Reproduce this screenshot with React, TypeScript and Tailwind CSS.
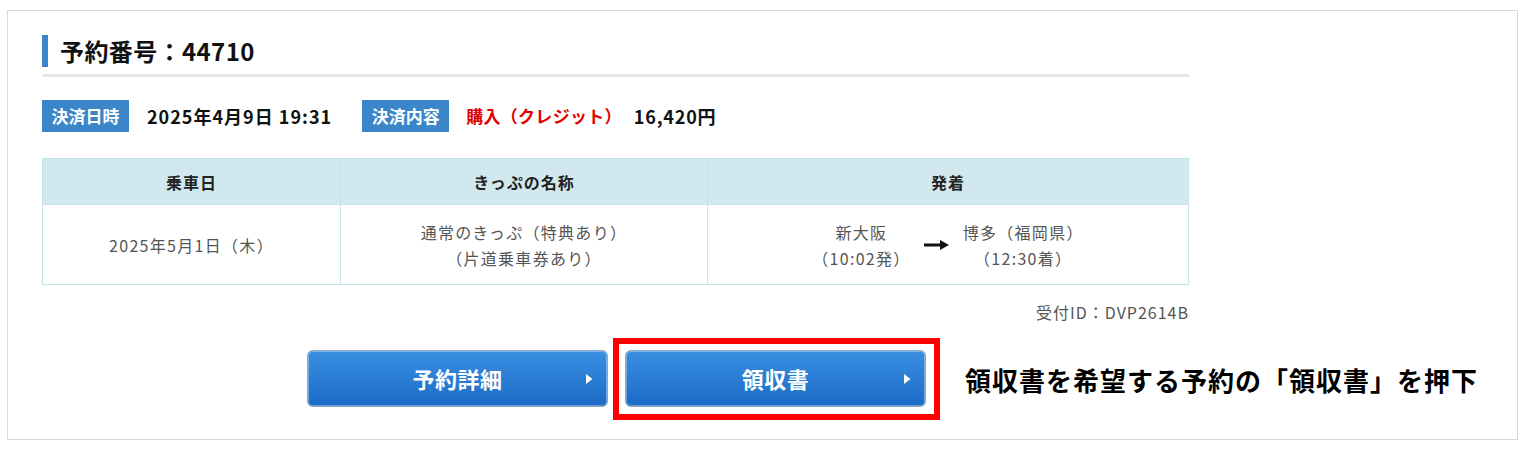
import React from "react";

const jp = { fontFamily: '"Noto Sans CJK JP", "Noto Sans", sans-serif' };

function Badge({ children }: { children: React.ReactNode }) {
  return (
    <div className="h-[32px] w-[87px] bg-[#3b86c8] text-white font-bold text-[17px] flex items-center justify-center">
      {children}
    </div>
  );
}

function BlueButton({ label }: { label: string }) {
  return (
    <div className="relative w-[301px] h-[57px] rounded-[6px] border border-[#8ea6bf] bg-gradient-to-b from-[#3a8fe2] to-[#1a6bc6] shadow-[inset_0_0_0_1px_rgba(255,255,255,0.35)] flex items-center justify-center">
      <span className="text-white font-bold text-[22px] tracking-[0.5px]">{label}</span>
      <svg className="absolute right-[14px] top-1/2 -translate-y-1/2" width="8" height="11" viewBox="0 0 8 11">
        <path d="M1 0.5 L7.5 5.5 L1 10.5 Z" fill="#fff" />
      </svg>
    </div>
  );
}

export default function App() {
  return (
    <div className="w-[1536px] h-[453px] bg-white pt-[10px] pl-[7px]" style={jp}>
      <div className="w-[1511px] h-[430px] border border-[#d9d9d9] pt-[24px] pl-[34px]">
        <div className="w-[1147px] flex flex-col">
          <div className="h-[32px] border-l-[6px] border-[#3b86c8] pl-[12px] flex items-center">
            <span className="text-[24px] font-bold text-[#111] leading-none tracking-[0.4px]">予約番号：44710</span>
          </div>
          <div className="mt-[7px] h-[3px] bg-[#e6e6e6]" />
          <div className="mt-[23px] flex items-center">
            <Badge>決済日時</Badge>
            <span className="ml-[18px] text-[18px] font-bold text-[#111] tracking-[1px]">2025年4月9日 19:31</span>
            <div className="ml-[30px]">
              <Badge>決済内容</Badge>
            </div>
            <span className="ml-[17px] text-[17px] font-bold text-[#e00000] tracking-[0.3px]">購入（クレジット）</span>
            <span className="ml-[12px] text-[18px] font-bold text-[#111] tracking-[0.8px]">16,420円</span>
          </div>
          <table className="mt-[26px] w-[1147px] border-collapse border border-[#c6e2ea] text-[16px] tracking-[1px]">
            <thead>
              <tr className="h-[46px] bg-[#d1e8ee]">
                <th className="w-[298px] border border-[#c6e2ea] font-bold text-[#222]">乗車日</th>
                <th className="w-[367px] border border-[#c6e2ea] font-bold text-[#222]">きっぷの名称</th>
                <th className="border border-[#c6e2ea] font-bold text-[#222]">発着</th>
              </tr>
            </thead>
            <tbody>
              <tr className="h-[80px] text-[#555] leading-[26px] tracking-[1.3px]">
                <td className="border border-[#c6e2ea] text-center">2025年5月1日（木）</td>
                <td className="border border-[#c6e2ea] text-center">
                  <div>通常のきっぷ（特典あり）</div>
                  <div>（片道乗車券あり）</div>
                </td>
                <td className="border border-[#c6e2ea]">
                  <div className="flex items-center justify-center gap-[13px]">
                    <div className="text-center">
                      <div>新大阪</div>
                      <div>（10:02発）</div>
                    </div>
                    <svg width="26" height="12" viewBox="0 0 26 12">
                      <path d="M0 6 H18" stroke="#111" strokeWidth="3" />
                      <path d="M16 1 L25 6 L16 11 Z" fill="#111" />
                    </svg>
                    <div className="text-center">
                      <div>博多（福岡県）</div>
                      <div>（12:30着）</div>
                    </div>
                  </div>
                </td>
              </tr>
            </tbody>
          </table>
          <div className="mt-[15px] text-right text-[16px] text-[#555] tracking-[1px]">受付ID：DVP2614B</div>
          <div className="mt-[26px] flex justify-center gap-[17px] pl-[2px]">
            <BlueButton label="予約詳細" />
            <div className="relative">
              <BlueButton label="領収書" />
              <div className="absolute -left-[12px] -top-[12px] -right-[14px] -bottom-[13px] border-[6px] border-[#ff0000]" />
              <div className="absolute left-[340px] top-1/2 -translate-y-1/2 whitespace-nowrap text-[26px] font-bold text-black tracking-[1px]">
                領収書を希望する予約の「領収書」を押下
              </div>
            </div>
          </div>
        </div>
      </div>
    </div>
  );
}
